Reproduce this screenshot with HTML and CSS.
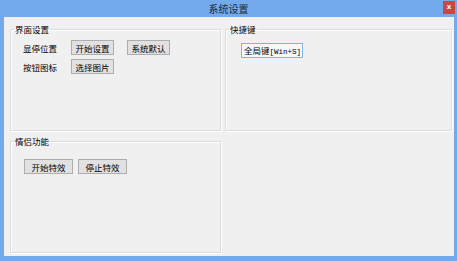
FILE: index.html
```html
<!DOCTYPE html>
<html lang="zh">
<head>
  <meta charset="UTF-8" />
  <title>系统设置</title>
  <link rel="stylesheet" href="styles.css">
</head>
<body>
  <div class="window">
    <div class="titlebar">
      <span></span>
      <span class="title">系统设置</span>
      <span class="close">x</span>
    </div>
    <div class="client">
      <fieldset class="group group-ui">
        <legend>界面设置</legend>
        <div class="group-body">
          <div class="row">
            <span class="label">显停位置</span>
            <button class="btn">开始设置</button>
            <button class="btn">系统默认</button>
          </div>
          <div class="row">
            <span class="label">按钮图标</span>
            <button class="btn">选择图片</button>
          </div>
        </div>
      </fieldset>

      <fieldset class="group group-key">
        <legend>快捷键</legend>
        <div class="group-body">
          <div class="hotkey">全局键<span class="mono">[Win+S]</span></div>
        </div>
      </fieldset>

      <fieldset class="group group-love">
        <legend>情侣功能</legend>
        <div class="group-body">
          <div class="row">
            <button class="btn btn-wide">开始特效</button>
            <button class="btn btn-wide">停止特效</button>
          </div>
        </div>
      </fieldset>
    </div>
  </div>
</body>
</html>
```

FILE: styles.css
```css
body {
  margin: 0;
  font-family: "Noto Sans CJK SC", "DejaVu Sans", sans-serif;
  font-size: 8.5px;
  color: #000;
}

.window {
  width: 457px;
  height: 261px;
  background-color: #72aaec;
  display: flex;
  flex-direction: column;
}

.titlebar {
  height: 17px;
  display: grid;
  grid-template-columns: 1fr auto 1fr;
  align-items: start;
}

.title {
  font-size: 10px;
  line-height: 17px;
  color: #1e2833;
}

.close {
  justify-self: end;
  margin: 1px 2px 0 0;
  width: 12px;
  height: 13px;
  background-color: #c84848;
  color: #fff;
  font-family: "DejaVu Sans", sans-serif;
  font-size: 7px;
  font-weight: bold;
  line-height: 12px;
  text-align: center;
}

.client {
  flex: 1;
  margin: 0 3px 5px 4px;
  background-color: #f0f0f0;
  padding: 6px 2px 3px 6px;
  display: grid;
  grid-template-columns: 211px 1fr;
  grid-template-rows: 108px 1fr;
  column-gap: 4px;
  row-gap: 4px;
}

.group {
  margin: 0;
  padding: 0;
  min-width: 0;
  border: 1px solid #dcdcdc;
  box-shadow: inset 1px 1px 0 #fff, 1px 1px 0 #fff;
}

.group legend {
  margin-left: 3px;
  padding: 0 1px;
  line-height: 12px;
}

.group-ui .group-body {
  padding: 5px 0 0 12px;
}

.group-key .group-body {
  padding: 8px 0 0 15px;
}

.group-love {
  grid-column: 1;
}

.group-love .group-body {
  padding: 12px 0 0 13px;
}

.row {
  display: flex;
  align-items: center;
  gap: 13px;
  height: 15px;
  margin-bottom: 4px;
}

.label {
  width: 35px;
}

.btn {
  width: 43px;
  height: 15px;
  padding: 0;
  font-family: inherit;
  font-size: 8.5px;
  color: #000;
  background-color: #e1e1e1;
  border: 1px solid #adadad;
}

.btn-wide {
  width: 49px;
}

.group-love .row {
  gap: 5px;
}

.hotkey {
  display: inline-block;
  white-space: nowrap;
  height: 13px;
  line-height: 13px;
  padding: 0 1px 0 2px;
  background-color: #f4f8fc;
  border: 1px solid #7eb4ea;
}

.mono {
  font-family: "Liberation Mono", monospace;
  font-size: 7.5px;
}
```
